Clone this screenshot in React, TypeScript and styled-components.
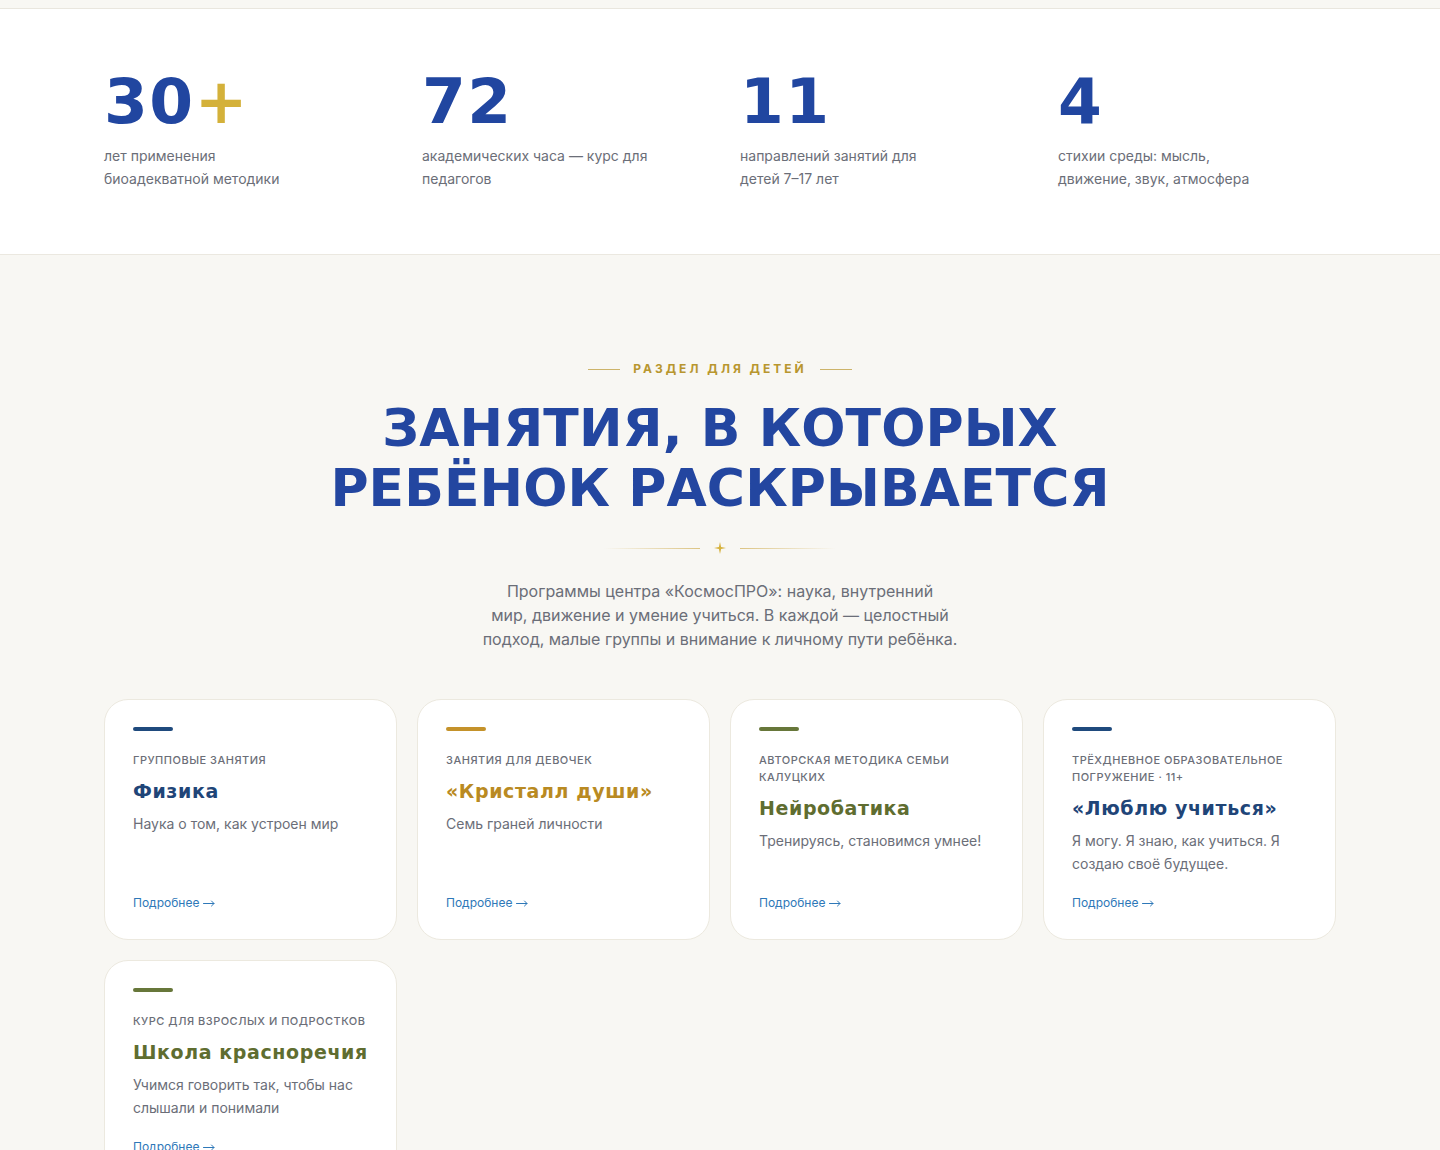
import React from "react";
import styled, { createGlobalStyle } from "styled-components";

const GlobalStyle = createGlobalStyle`
  * { box-sizing: border-box; }
  body {
    margin: 0;
    background: #f8f7f3;
    font-family: Inter, "Noto Sans", Arial, sans-serif;
    -webkit-font-smoothing: antialiased;
  }
`;

const display = `"DejaVu Sans", "Liberation Sans", sans-serif`;

const TopStrip = styled.div`
  height: 9px;
  background: #f8f7f3;
  border-bottom: 1px solid #e9e6de;
`;

const StatsBand = styled.section`
  background: #ffffff;
  border-bottom: 1px solid #ebe8e0;
  padding: 62px 104px 64px;
`;

const StatsGrid = styled.div`
  display: grid;
  grid-template-columns: repeat(4, 1fr);
  gap: 40px;
  max-width: 1232px;
  margin: 0 auto;
`;

const Stat = styled.div`
  display: flex;
  flex-direction: column;
`;

const StatNumber = styled.div`
  font-family: ${display};
  font-weight: 700;
  font-size: 63px;
  line-height: 62px;
  color: #2146a0;
  letter-spacing: 1.5px;
`;

const Accent = styled.span`
  color: #d4b13a;
`;

const StatLabel = styled.p`
  margin: 11px 0 0;
  font-size: 14px;
  line-height: 23px;
  color: #6b6e78;
  white-space: nowrap;
`;

const Programs = styled.section`
  padding: 106px 104px 120px;
  display: flex;
  flex-direction: column;
  align-items: center;
`;

const Eyebrow = styled.div`
  display: flex;
  align-items: center;
  gap: 13px;
  font-size: 12px;
  line-height: 16px;
  font-weight: 700;
  letter-spacing: 3px;
  color: #b8962e;
  text-transform: uppercase;
`;

const EyebrowLine = styled.span`
  width: 32px;
  height: 1px;
  background: #cdb46a;
`;

const Heading = styled.h2`
  margin: 21px 0 0;
  font-family: ${display};
  font-weight: 700;
  font-size: 52px;
  line-height: 60px;
  letter-spacing: 0.1px;
  color: #2346a0;
  text-align: center;
  text-transform: uppercase;
`;

const Divider = styled.div`
  margin-top: 24px;
  display: flex;
  align-items: center;
  gap: 14px;
  height: 12px;
`;

const DividerLine = styled.span<{ $reverse?: boolean }>`
  width: 96px;
  height: 1px;
  background: linear-gradient(
    ${(p) => (p.$reverse ? "to left" : "to right")},
    rgba(214, 186, 100, 0),
    #dcc483
  );
`;

const Lead = styled.p`
  margin: 25px 0 0;
  font-size: 16px;
  line-height: 24px;
  color: #6b6e78;
  text-align: center;
  white-space: nowrap;
`;

const CardGrid = styled.div`
  margin-top: 48px;
  width: 100%;
  max-width: 1232px;
  display: grid;
  grid-template-columns: repeat(4, 1fr);
  gap: 20px 20px;
`;

const Card = styled.article`
  background: #ffffff;
  border: 1px solid #ece9df;
  border-radius: 24px;
  padding: 27px 28px 27px;
  display: flex;
  flex-direction: column;
`;

const Bar = styled.span<{ $color: string }>`
  display: block;
  width: 40px;
  height: 4px;
  border-radius: 2px;
  background: ${(p) => p.$color};
`;

const Category = styled.div`
  margin-top: 21px;
  font-size: 11px;
  line-height: 17px;
  font-weight: 500;
  letter-spacing: 0.5px;
  text-transform: uppercase;
  color: #6b6e78;
`;

const Title = styled.h3<{ $color: string }>`
  margin: 9px 0 0;
  font-family: ${display};
  font-weight: 700;
  font-size: 19px;
  line-height: 26px;
  letter-spacing: 0.6px;
  color: ${(p) => p.$color};
`;

const Description = styled.p`
  margin: 8px 0 0;
  font-size: 14px;
  line-height: 23px;
  color: #6b6e78;
`;

const More = styled.a`
  margin-top: auto;
  padding-top: 19px;
  display: inline-flex;
  align-items: center;
  gap: 4px;
  align-self: flex-start;
  font-size: 12px;
  line-height: 18px;
  color: #2e78b8;
  text-decoration: none;
`;

const ArrowIcon = () => (
  <svg width="12" height="8" viewBox="0 0 12 8" aria-hidden="true">
    <path
      d="M0.5 4.5 H11 M8.5 2 L11 4.5 L8.5 7"
      fill="none"
      stroke="currentColor"
      strokeWidth="1"
      strokeLinecap="round"
      strokeLinejoin="round"
    />
  </svg>
);

const Sparkle = () => (
  <svg width="12" height="12" viewBox="0 0 12 12" aria-hidden="true">
    <path
      d="M6 0 L7.1 4.9 L12 6 L7.1 7.1 L6 12 L4.9 7.1 L0 6 L4.9 4.9 Z"
      fill="#d6b23e"
    />
  </svg>
);

const stats = [
  { value: "30", plus: true, label: ["лет применения", "биоадекватной методики"] },
  { value: "72", label: ["академических часа — курс для", "педагогов"] },
  { value: "11", label: ["направлений занятий для", "детей 7–17 лет"] },
  { value: "4", label: ["стихии среды: мысль,", "движение, звук, атмосфера"] },
];

const leadLines = [
  "Программы центра «КосмосПРО»: наука, внутренний",
  "мир, движение и умение учиться. В каждой — целостный",
  "подход, малые группы и внимание к личному пути ребёнка.",
];

const NAVY = "#1f4578";
const GOLD = "#b98a22";
const OLIVE = "#5f6d30";

const programs = [
  {
    bar: "#1f4a7d",
    color: NAVY,
    category: "Групповые занятия",
    title: "Физика",
    text: "Наука о том, как устроен мир",
  },
  {
    bar: "#c4922a",
    color: GOLD,
    category: "Занятия для девочек",
    title: "«Кристалл души»",
    text: "Семь граней личности",
  },
  {
    bar: "#67773a",
    color: OLIVE,
    category: "Авторская методика семьи Калуцких",
    title: "Нейробатика",
    text: "Тренируясь, становимся умнее!",
  },
  {
    bar: "#1f4a7d",
    color: NAVY,
    category: "Трёхдневное образовательное погружение · 11+",
    title: "«Люблю учиться»",
    text: "Я могу. Я знаю, как учиться. Я создаю своё будущее.",
  },
  {
    bar: "#67773a",
    color: OLIVE,
    category: "Курс для взрослых и подростков",
    title: "Школа красноречия",
    text: "Учимся говорить так, чтобы нас слышали и понимали",
  },
];

const withBreaks = (lines: string[]) =>
  lines.map((line, i) => (
    <React.Fragment key={i}>
      {i > 0 && <br />}
      {line}
    </React.Fragment>
  ));

export default function App() {
  return (
    <>
      <GlobalStyle />
      <TopStrip />
      <StatsBand>
        <StatsGrid>
          {stats.map((s) => (
            <Stat key={s.value}>
              <StatNumber>
                {s.value}
                {s.plus && <Accent>+</Accent>}
              </StatNumber>
              <StatLabel>{withBreaks(s.label)}</StatLabel>
            </Stat>
          ))}
        </StatsGrid>
      </StatsBand>
      <Programs>
        <Eyebrow>
          <EyebrowLine />
          Раздел для детей
          <EyebrowLine />
        </Eyebrow>
        <Heading>
          Занятия, в которых
          <br />
          ребёнок раскрывается
        </Heading>
        <Divider>
          <DividerLine />
          <Sparkle />
          <DividerLine $reverse />
        </Divider>
        <Lead>{withBreaks(leadLines)}</Lead>
        <CardGrid>
          {programs.map((p) => (
            <Card key={p.title}>
              <Bar $color={p.bar} />
              <Category>{p.category}</Category>
              <Title $color={p.color}>{p.title}</Title>
              <Description>{p.text}</Description>
              <More href="#">
                Подробнее
                <ArrowIcon />
              </More>
            </Card>
          ))}
        </CardGrid>
      </Programs>
    </>
  );
}
